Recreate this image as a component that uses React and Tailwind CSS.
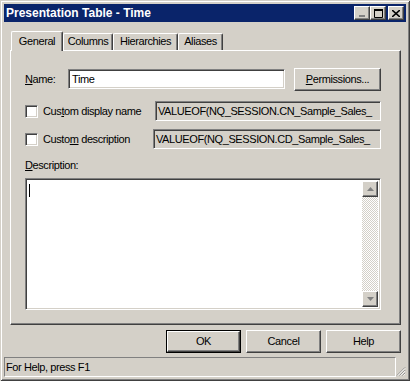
import React from 'react'

const raised =
  'border border-t-white border-l-white border-r-[#404040] border-b-[#404040] shadow-[inset_-1px_-1px_0_#808080]'
const sunken =
  'border border-t-[#808080] border-l-[#808080] border-r-white border-b-white shadow-[inset_1px_1px_0_#404040,inset_-1px_-1px_0_#d4d0c8]'

function U({ children }) {
  return <span className="underline underline-offset-[1px]">{children}</span>
}

function TitleButton({ children }) {
  return (
    <div className={`w-[16px] h-[14px] bg-[#d4d0c8] flex items-center justify-center ${raised}`}>
      {children}
    </div>
  )
}

function Tab({ label, active, width }) {
  if (active) {
    return (
      <div
        style={{ width }}
        className="relative z-10 -mb-px h-[20px] bg-[#d4d0c8] border-t border-l border-t-white border-l-white border-r border-r-[#404040] rounded-t-[2px] shadow-[inset_-1px_0_0_#808080] flex justify-center pt-[3px]"
      >
        {label}
      </div>
    )
  }
  return (
    <div
      style={{ width }}
      className="h-[17px] bg-[#d4d0c8] border-t border-l border-t-white border-l-white border-r border-r-[#404040] rounded-t-[2px] shadow-[inset_-1px_0_0_#808080] flex justify-center pt-[1px]"
    >
      {label}
    </div>
  )
}

function Checkbox() {
  return <div className={`w-[13px] h-[13px] bg-white ${sunken}`} />
}

function Button({ children, width, isDefault }) {
  if (isDefault) {
    return (
      <div style={{ width }} className="h-[23px] border border-black">
        <div className={`w-full h-full bg-[#d4d0c8] flex items-center justify-center ${raised}`}>{children}</div>
      </div>
    )
  }
  return (
    <div style={{ width }} className={`h-[23px] bg-[#d4d0c8] flex items-center justify-center ${raised}`}>
      {children}
    </div>
  )
}

function ScrollArrow({ up }) {
  return (
    <div className={`w-[16px] h-[16px] bg-[#d4d0c8] flex items-center justify-center ${raised}`}>
      <svg width="7" height="4" viewBox="0 0 7 4">
        {up ? <path d="M3.5 0 L7 4 L0 4 Z" fill="#808080" /> : <path d="M0 0 L7 0 L3.5 4 Z" fill="#808080" />}
      </svg>
    </div>
  )
}

export default function App() {
  return (
    <div
      className="w-[410px] h-[381px] bg-[#d4d0c8] p-[4px] text-[11px] leading-[13px] tracking-[-0.4px] text-black shadow-[inset_1px_1px_0_#d4d0c8,inset_-1px_-1px_0_#404040,inset_2px_2px_0_#fff,inset_-2px_-2px_0_#808080] flex flex-col"
      style={{ fontFamily: '"Liberation Sans", Arial, sans-serif' }}
    >
      {/* Title bar */}
      <div className="h-[18px] bg-[#0a246a] flex items-center pl-[2px] pr-[2px]">
        <span className="flex-1 text-white font-bold text-[12px] tracking-normal">Presentation Table - Time</span>
        <div className="flex items-center">
          <TitleButton>
            <svg width="8" height="7" viewBox="0 0 8 7">
              <rect x="1" y="5" width="6" height="2" fill="#808080" />
            </svg>
          </TitleButton>
          <TitleButton>
            <svg width="9" height="9" viewBox="0 0 9 9">
              <path d="M0.5 1.5 H8.5 V8.5 H0.5 Z" fill="none" stroke="#000" />
              <rect x="0" y="0" width="9" height="2" fill="#000" />
            </svg>
          </TitleButton>
          <div className="w-[2px]" />
          <TitleButton>
            <svg width="8" height="7" viewBox="0 0 8 7">
              <path d="M0 0 L8 7 M8 0 L0 7" stroke="#000" strokeWidth="1.6" />
            </svg>
          </TitleButton>
        </div>
      </div>

      {/* Tabs */}
      <div className="ml-[6px] mr-[5px] mt-[9px]">
        <div className="h-[19px] flex items-end pl-px">
          <Tab label="General" active width={52} />
          <Tab label="Columns" width={50} />
          <Tab label="Hierarchies" width={65} />
          <Tab label="Aliases" width={45} />
        </div>

        <div className="h-[275px] border border-t-white border-l-white border-r-[#404040] border-b-[#404040] shadow-[inset_-1px_-1px_0_#808080] pl-[14px] pt-[17px] flex flex-col">
          <div className="h-[22px] flex items-center">
            <span className="w-[43px]">
              <U>N</U>ame:
            </span>
            <div className={`w-[217px] h-[20px] bg-white flex items-center pl-[3px] ${sunken}`}>Time</div>
            <div className="w-[9px]" />
            <Button width={87}>
              <span>
                <U>P</U>ermissions...
              </span>
            </Button>
          </div>

          <div className="mt-[11px] h-[20px] flex items-center">
            <Checkbox />
            <span className="ml-[5px] w-[112px]">
              Cus<U>t</U>om display name
            </span>
            <div className={`w-[226px] h-[20px] bg-[#d4d0c8] flex items-center pl-[2px] overflow-hidden whitespace-nowrap ${sunken}`}>
              VALUEOF(NQ_SESSION.CN_Sample_Sales_
            </div>
          </div>

          <div className="mt-[8px] h-[20px] flex items-center">
            <Checkbox />
            <span className="ml-[5px] w-[110px]">
              Custo<U>m</U> description
            </span>
            <div className={`w-[228px] h-[20px] bg-[#d4d0c8] flex items-center pl-[2px] overflow-hidden whitespace-nowrap ${sunken}`}>
              VALUEOF(NQ_SESSION.CD_Sample_Sales_
            </div>
          </div>

          <div className="mt-[10px]">
            <U>D</U>escription:
          </div>

          <div className={`mt-[6px] w-[356px] h-[132px] bg-white flex p-[2px] ${sunken}`}>
            <div className="flex-1 pl-[1px] pt-[3px]">
              <div className="w-px h-[13px] bg-black" />
            </div>
            <div className="w-[16px] flex flex-col">
              <ScrollArrow up />
              <div className="flex-1 bg-[repeating-conic-gradient(#d4d0c8_0_25%,#ffffff_0_50%)] bg-[length:2px_2px]" />
              <ScrollArrow />
            </div>
          </div>
        </div>
      </div>

      {/* Buttons */}
      <div className="mt-[5px] mr-[5px] flex justify-end gap-[5px]">
        <Button width={75} isDefault>
          OK
        </Button>
        <Button width={75}>Cancel</Button>
        <Button width={75}>Help</Button>
      </div>

      {/* Status bar */}
      <div className="mt-[4px] h-[20px] flex">
        <div className="flex-1 border border-t-[#808080] border-l-[#808080] border-r-white border-b-white flex items-center pl-px">
          For Help, press F1
        </div>
        <div className="w-[10px] flex items-end justify-end">
          <svg width="11" height="11" viewBox="0 0 11 11">
            <path d="M10 1 L1 10 M10 4 L4 10 M10 7 L7 10" stroke="#808080" strokeWidth="1" />
            <path d="M10 2 L2 10 M10 5 L5 10 M10 8 L8 10" stroke="#fff" strokeWidth="1" />
          </svg>
        </div>
      </div>
    </div>
  )
}
